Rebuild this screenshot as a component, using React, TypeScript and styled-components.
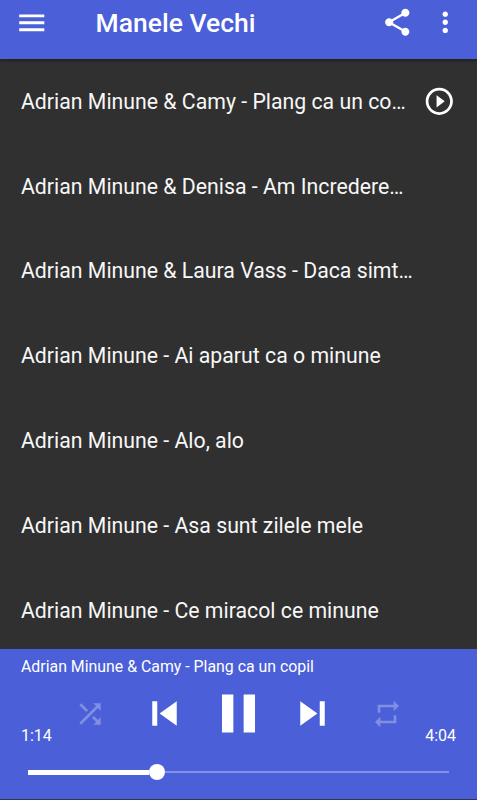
import React from "react";
import styled, { createGlobalStyle } from "styled-components";

const Global = createGlobalStyle`
  * { box-sizing: border-box; }
  body { margin: 0; background: #303030; font-family: Roboto, sans-serif; color: #fff; overflow: hidden; }
  button { all: unset; display: block; cursor: pointer; }
  svg { display: block; }
`;
const Screen = styled.div`
  width: 477px; height: 800px; display: flex; flex-direction: column; overflow: hidden;
`;
const TopBar = styled.header`
  height: 60px; flex: none; background: #4a5fd8; display: flex; align-items: flex-start;
  padding: 6px 16px 0 15px; border-bottom: 1px solid #26251c; box-shadow: 0 1px 3px rgba(0,0,0,.35); z-index: 1;
`;
const Title = styled.h1`
  margin: 0 0 0 47px; flex: 1; font-size: 26.5px; line-height: 34px; font-weight: 500; white-space: nowrap;
`;
const IconButton = styled.button<{ $gap?: number }>`
  margin-left: ${(p) => p.$gap ?? 0}px;
`;
const List = styled.ul`
  list-style: none; margin: -1px 0 0; padding: 0; flex: 1; min-height: 0; overflow: hidden;
`;
const Row = styled.li`
  height: 84.8px; display: flex; align-items: center; padding: 0 21px; justify-content: space-between;
`;
const Track = styled.span`
  font-size: 21.27px; line-height: 26px; padding-top: 1px; white-space: nowrap; color: #f7f7f7;
`;
const Player = styled.footer`
  height: 151px; flex: none; background: #4a5fd8; display: flex; flex-direction: column; padding: 8px 21px 0;
  border-bottom: 1px solid #36384a;
`;
const NowPlaying = styled.div`
  font-size: 15.87px; line-height: 19px;
`;
const Controls = styled.div`
  height: 69px; display: flex; justify-content: space-between; align-items: flex-end;
`;
const Time = styled.span`
  font-size: 16px; line-height: 19px;
`;
const Buttons = styled.div`
  display: grid; grid-template-columns: repeat(5, 74.1px); place-items: center;
  height: 75px; align-self: flex-start;
`;
const Seek = styled.div`
  display: flex; align-items: center; margin: 17px 7px 0; height: 20px;
`;
const Played = styled.div`
  width: 121px; height: 5px; background: #fff;
`;
const Thumb = styled.div`
  width: 16px; height: 16px; border-radius: 50%; background: #fff;
`;
const Remaining = styled.div`
  flex: 1; height: 2px; background: #8390e3;
`;

type IconProps = { d: string; size: number; opacity?: number };
const Icon = ({ d, size, opacity = 1 }: IconProps) => (
  <svg width={size} height={size} viewBox="0 0 24 24" fill="#fff" opacity={opacity}><path d={d} /></svg>
);
const menu = "M3 18h18v-2H3v2zm0-5h18v-2H3v2zm0-7v2h18V6H3z";
const share = "M18 16.08c-.76 0-1.44.3-1.96.77L8.91 12.7c.05-.23.09-.46.09-.7s-.04-.47-.09-.7l7.05-4.11c.54.5 1.25.81 2.04.81 1.66 0 3-1.34 3-3s-1.34-3-3-3-3 1.34-3 3c0 .24.04.47.09.7L8.04 9.81C7.5 9.31 6.79 9 6 9c-1.66 0-3 1.34-3 3s1.34 3 3 3c.79 0 1.5-.31 2.04-.81l7.12 4.16c-.05.21-.08.43-.08.65 0 1.61 1.31 2.92 2.92 2.92s2.92-1.31 2.92-2.92-1.31-2.92-2.92-2.92z";
const more = "M12 8c1.1 0 2-.9 2-2s-.9-2-2-2-2 .9-2 2 .9 2 2 2zm0 2c-1.1 0-2 .9-2 2s.9 2 2 2 2-.9 2-2-.9-2-2-2zm0 6c-1.1 0-2 .9-2 2s.9 2 2 2 2-.9 2-2-.9-2-2-2z";
const playCircle = "M10 16.5l6-4.5-6-4.5v9zM12 2C6.48 2 2 6.48 2 12s4.48 10 10 10 10-4.48 10-10S17.52 2 12 2zm0 18c-4.41 0-8-3.59-8-8s3.59-8 8-8 8 3.59 8 8-3.59 8-8 8z";
const shuffle = "M10.59 9.17L5.41 4 4 5.41l5.17 5.17 1.42-1.41zM14.5 4l2.04 2.04L4 18.59 5.41 20 17.96 7.46 20 9.5V4h-5.5zm.33 9.41l-1.41 1.41 3.13 3.13L14.5 20H20v-5.5l-2.04 2.04-3.13-3.13z";
const previous = "M6 6h2.45v12H6zm3.6 6l8.4 6V6z";
const pause = "M5.9 19h4.2V5H5.9v14zm8-14v14h4.2V5h-4.2z";
const next = "M6 18l8.4-6L6 6v12zM15.55 6v12H18V6h-2.45z";
const repeat = "M7 7h10v3l4-4-4-4v3H5v6h2V7zm10 10H7v-3l-4 4 4 4v-3h12v-6h-2v4z";

const tracks = [
  "Adrian Minune & Camy - Plang ca un co…",
  "Adrian Minune & Denisa - Am Incredere…",
  "Adrian Minune & Laura Vass - Daca simt…",
  "Adrian Minune - Ai aparut ca o minune",
  "Adrian Minune - Alo, alo",
  "Adrian Minune - Asa sunt zilele mele",
  "Adrian Minune - Ce miracol ce minune",
];

export default function App() {
  return (
    <>
      <Global />
      <Screen>
        <TopBar>
          <IconButton aria-label="Menu"><Icon d={menu} size={33.5} /></IconButton>
          <Title>Manele Vechi</Title>
          <IconButton aria-label="Share"><Icon d={share} size={32.5} /></IconButton>
          <IconButton aria-label="More" $gap={15.5}><Icon d={more} size={32.5} /></IconButton>
        </TopBar>
        <List>
          {tracks.map((t, i) => (
            <Row key={t}>
              <Track>{t}</Track>
              {i === 0 && <IconButton aria-label="Play"><Icon d={playCircle} size={32.6} /></IconButton>}
            </Row>
          ))}
        </List>
        <Player>
          <NowPlaying>Adrian Minune & Camy - Plang ca un copil</NowPlaying>
          <Controls>
            <Time>1:14</Time>
            <Buttons>
              <IconButton aria-label="Shuffle"><Icon d={shuffle} size={32} opacity={0.3} /></IconButton>
              <IconButton aria-label="Previous"><Icon d={previous} size={49} /></IconButton>
              <IconButton aria-label="Pause"><Icon d={pause} size={65} /></IconButton>
              <IconButton aria-label="Next"><Icon d={next} size={49} /></IconButton>
              <IconButton aria-label="Repeat"><Icon d={repeat} size={32} opacity={0.3} /></IconButton>
            </Buttons>
            <Time>4:04</Time>
          </Controls>
          <Seek><Played /><Thumb /><Remaining /></Seek>
        </Player>
      </Screen>
    </>
  );
}
